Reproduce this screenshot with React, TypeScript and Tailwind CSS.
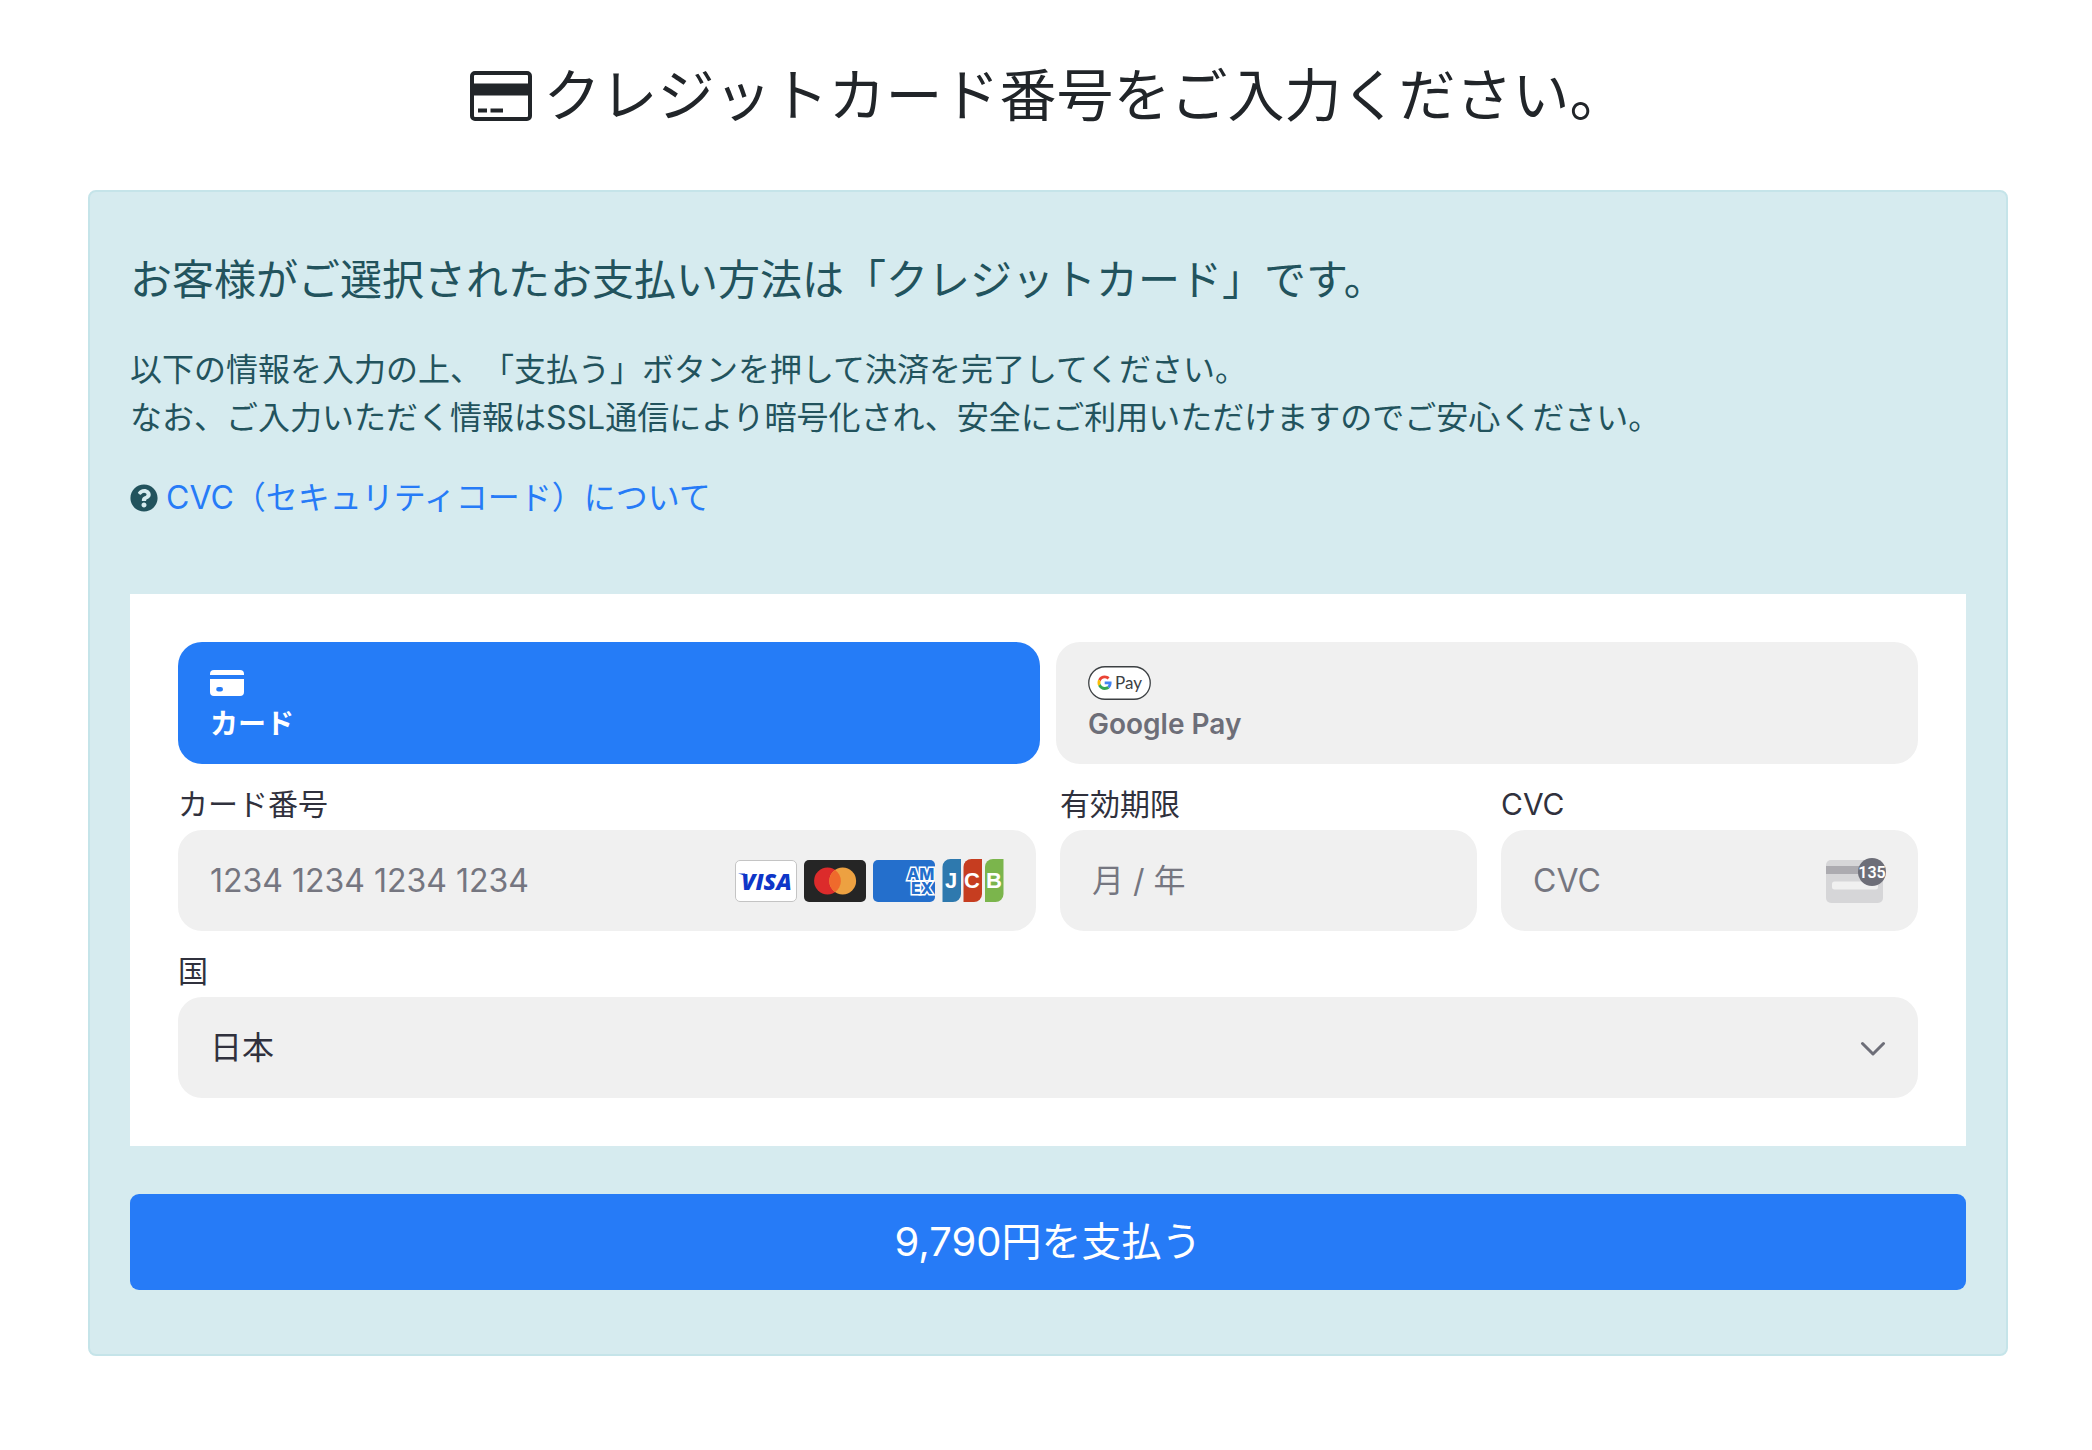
import React from "react";
import { FaQuestionCircle } from "react-icons/fa";

const fieldBox = "flex items-center rounded-[24px] bg-[#f0f0f0] px-8 h-[101px]";
const fieldLabel = "mb-2 block text-[30px] leading-9 text-[#30313d]";
const tab = "rounded-[24px] px-8 pt-6 pb-[22px] text-left";

function CardOutline() {
  return (
    <svg width="62" height="50" viewBox="0 0 62 50" className="shrink-0" fill="currentColor" aria-hidden="true">
      <path
        fillRule="evenodd"
        d="M5 0h52a5 5 0 0 1 5 5v40a5 5 0 0 1-5 5H5a5 5 0 0 1-5-5V5a5 5 0 0 1 5-5zM5 4a1 1 0 0 0-1 1v7.500h54V5a1 1 0 0 0-1-1zM4 24.500V45a1 1 0 0 0 1 1h52a1 1 0 0 0 1-1V24.500z"
      />
      <path d="M8 37.500h9v4H8zM20.500 37.500H33v4H20.500z" />
    </svg>
  );
}

function CardGlyph() {
  return (
    <svg width="34" height="26" viewBox="0 0 34 26" fill="currentColor" aria-hidden="true">
      <path d="M4 0h26a4 4 0 0 1 4 4v1H0V4a4 4 0 0 1 4-4z" />
      <path
        fillRule="evenodd"
        d="M0 9h34v13a4 4 0 0 1-4 4H4a4 4 0 0 1-4-4V9zm8.500 8a2.300 2.300 0 0 0 0 4.600h2.200a2.300 2.300 0 0 0 0-4.600z"
      />
    </svg>
  );
}

function GooglePayMark() {
  return (
    <svg width="63" height="34" viewBox="0 0 63 34" aria-hidden="true">
      <rect x="0.75" y="0.75" width="61.500" height="32.500" rx="16.250" fill="#fff" stroke="#3c4043" strokeWidth="1.300" />
      <g transform="translate(9.500 9.500) scale(0.3)">
        <path fill="#EA4335" d="M24 9.500c3.540 0 6.710 1.220 9.210 3.600l6.850-6.850C35.900 2.380 30.470 0 24 0 14.620 0 6.510 5.380 2.560 13.220l7.980 6.190C12.430 13.720 17.740 9.500 24 9.500z" />
        <path fill="#4285F4" d="M46.980 24.550c0-1.570-.15-3.090-.38-4.550H24v9.020h12.940c-.58 2.960-2.260 5.480-4.780 7.180l7.730 6c4.510-4.180 7.090-10.360 7.090-17.650z" />
        <path fill="#FBBC05" d="M10.530 28.590c-.48-1.450-.76-2.990-.76-4.590s.27-3.140.76-4.590l-7.980-6.190C.92 16.460 0 20.120 0 24c0 3.880.92 7.540 2.560 10.780l7.970-6.190z" />
        <path fill="#34A853" d="M24 48c6.480 0 11.930-2.130 15.890-5.810l-7.730-6c-2.150 1.450-4.920 2.300-8.160 2.300-6.260 0-11.570-4.220-13.470-9.910l-7.980 6.190C6.510 42.620 14.620 48 24 48z" />
      </g>
      <text x="27" y="23" fontFamily="Lato, sans-serif" fontWeight="400" fontSize="17" fill="#3c4043">Pay</text>
    </svg>
  );
}

function Visa() {
  return (
    <svg width="62" height="42" viewBox="0 0 62 42" role="img" aria-label="Visa">
      <rect x="0.5" y="0.5" width="61" height="41" rx="4.500" fill="#fff" stroke="#c4c4c4" />
      <text x="31.500" y="30" textAnchor="middle" fontFamily="Open Sans, sans-serif" fontWeight="800" fontStyle="italic" fontSize="23" fill="#0e36c8">VISA</text>
      <path d="M3 13.500h7l2 5c-2-2.500-5-4.200-9-5z" fill="#0e36c8" />
    </svg>
  );
}

function Mastercard() {
  return (
    <svg width="62" height="42" viewBox="0 0 62 42" role="img" aria-label="Mastercard">
      <rect width="62" height="42" rx="5" fill="#252525" />
      <circle cx="23.500" cy="21" r="13.400" fill="#dc2b2b" />
      <circle cx="38.700" cy="21" r="13.400" fill="#eda141" />
      <path d="M31.100 10a13.400 13.400 0 0 1 0 22 13.400 13.400 0 0 1 0-22z" fill="#ef6a2c" />
    </svg>
  );
}

function Amex() {
  return (
    <svg width="62" height="42" viewBox="0 0 62 42" role="img" aria-label="American Express">
      <rect width="62" height="42" rx="5" fill="#246fcc" />
      <text
        fontFamily="Inter, sans-serif"
        fontWeight="800"
        fontSize="16"
        fill="#246fcc"
        stroke="#fff"
        strokeWidth="3"
        strokeLinejoin="miter"
        paintOrder="stroke"
      >
        <tspan x="34" y="20">AM</tspan>
        <tspan x="38" y="34">EX</tspan>
      </text>
    </svg>
  );
}

function Jcb() {
  return (
    <svg width="62" height="43" viewBox="0 0 62 43" role="img" aria-label="JCB">
      <path d="M8.500 0H19v35a8 8 0 0 1-8 8H.5V8a8 8 0 0 1 8-8z" fill="#2e79ae" />
      <path d="M29.500 0H40v35a8 8 0 0 1-8 8H21.500V8a8 8 0 0 1 8-8z" fill="#c63d20" />
      <path d="M51 0h10.500v35a8 8 0 0 1-8 8H43V8a8 8 0 0 1 8-8z" fill="#7bb54c" />
      <text fontFamily="Liberation Sans, sans-serif" fontWeight="700" fontSize="22" fill="#fff" textAnchor="middle">
        <tspan x="9" y="29">J</tspan>
        <tspan x="30" y="29">C</tspan>
        <tspan x="52" y="29">B</tspan>
      </text>
    </svg>
  );
}

function CvcHint() {
  return (
    <svg width="60" height="46" viewBox="0 0 60 46" aria-hidden="true">
      <rect y="2" width="57" height="43" rx="5" fill="#d6d6d8" />
      <rect y="8" width="57" height="8" fill="#acabb0" />
      <rect x="6" y="23.500" width="46" height="8" rx="2.500" fill="#f0f0f0" />
      <circle cx="46" cy="14" r="14" fill="#6d6e78" />
      <text x="46" y="20" textAnchor="middle" fontFamily="Roboto, sans-serif" fontWeight="600" fontSize="16" fill="#fff">135</text>
    </svg>
  );
}

export default function App() {
  return (
    <main className="pl-[88px] pr-[84px] pt-[53px] pb-[94px] bg-white font-['Inter','Noto_Sans_CJK_JP',sans-serif] [text-spacing-trim:space-all]">
      <h1 className="flex items-center justify-center gap-3 text-[57px] leading-[86px] text-[#212529]">
        <CardOutline />
        クレジットカード番号をご入力ください。
      </h1>

      <section className="mt-[51px] rounded-lg border-2 border-[#c5e4e9] bg-[#d6ebef] px-10 pt-[58px] pb-16 text-[#22535d]">
        <h2 className="text-[42px] leading-[60px]">
          お客様がご選択されたお支払い方法は「クレジットカード」です。
        </h2>
        <p className="mt-9 text-[32px] leading-[48px]">
          以下の情報を入力の上、「支払う」ボタンを押して決済を完了してください。
          <br />
          なお、ご入力いただく情報はSSL通信により暗号化され、安全にご利用いただけますのでご安心ください。
        </p>
        <p className="mt-8 flex items-center gap-2 text-[32px] leading-[48px]">
          <FaQuestionCircle className="size-7 shrink-0" aria-hidden="true" />
          <a href="#cvc" className="text-[#267bf7]">
            CVC（セキュリティコード）について
          </a>
        </p>

        <form onSubmit={(e) => e.preventDefault()}>
          <div className="mt-[72px] bg-white p-12">
            <div className="grid grid-cols-2 gap-4 text-[28px] font-semibold leading-9">
              <button type="button" className={`${tab} bg-[#257cf7] text-white`}>
                <span className="flex h-[34px] items-center">
                  <CardGlyph />
                </span>
                <span className="mt-[6px] block">カード</span>
              </button>
              <button type="button" className={`${tab} bg-[#f0f0f0] text-[#6d6e78]`}>
                <span className="flex h-[34px] items-center">
                  <GooglePayMark />
                </span>
                <span className="mt-[6px] block">Google Pay</span>
              </button>
            </div>

            <div className="mt-[22px] grid grid-cols-4 gap-x-6 gap-y-[22px]">
              <div className="col-span-2">
                <label htmlFor="number" className={fieldLabel}>カード番号</label>
                <div className={fieldBox}>
                  <input
                    id="number"
                    placeholder="1234 1234 1234 1234"
                    className="min-w-0 flex-1 bg-transparent text-[32px] text-[#30313d] outline-none placeholder:text-[#757680]"
                  />
                  <div className="flex shrink-0 items-center gap-[7px]">
                    <Visa />
                    <Mastercard />
                    <Amex />
                    <Jcb />
                  </div>
                </div>
              </div>
              <div>
                <label htmlFor="expiry" className={fieldLabel}>有効期限</label>
                <div className={fieldBox}>
                  <input
                    id="expiry"
                    placeholder="月 / 年"
                    className="min-w-0 flex-1 bg-transparent text-[32px] text-[#30313d] outline-none placeholder:text-[#757680]"
                  />
                </div>
              </div>
              <div>
                <label htmlFor="cvc" className={fieldLabel}>CVC</label>
                <div className={fieldBox}>
                  <input
                    id="cvc"
                    placeholder="CVC"
                    className="min-w-0 flex-1 bg-transparent text-[32px] text-[#30313d] outline-none placeholder:text-[#757680]"
                  />
                  <CvcHint />
                </div>
              </div>
              <div className="col-span-4">
                <label htmlFor="country" className={fieldLabel}>国</label>
                <div className="relative">
                  <select
                    id="country"
                    className="block h-[101px] w-full appearance-none rounded-[24px] bg-[#f0f0f0] px-8 text-[32px] text-[#30313d] outline-none"
                  >
                    <option>日本</option>
                  </select>
                  <svg
                    className="pointer-events-none absolute top-1/2 right-8 -translate-y-1/2"
                    width="26"
                    height="16"
                    viewBox="0 0 26 16"
                    fill="none"
                    stroke="#6d6e78"
                    strokeWidth="3"
                    strokeLinecap="round"
                    strokeLinejoin="round"
                    aria-hidden="true"
                  >
                    <path d="M2.500 3.500 13 14 23.500 3.500" />
                  </svg>
                </div>
              </div>
            </div>
          </div>

          <button type="submit" className="mt-12 block h-24 w-full rounded-[9px] bg-[#267bf7] text-[40px] leading-[60px] text-white">
            9,790円を支払う
          </button>
        </form>
      </section>
    </main>
  );
}
